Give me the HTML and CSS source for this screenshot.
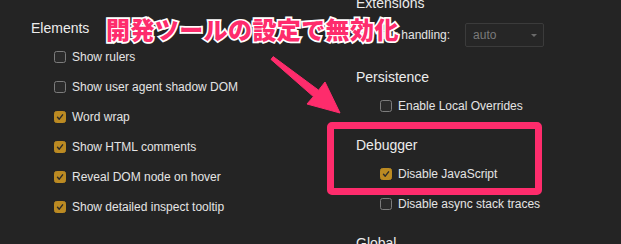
FILE: index.html
```html
<!DOCTYPE html>
<html lang="ja">
<head>
<meta charset="utf-8">
<title>Settings</title>
<link rel="stylesheet" href="styles.css">
</head>
<body>
<div class="page">
  <div class="col col-left">
    <section class="section">
      <h2 class="heading">Elements</h2>
      <div class="rows">
        <label class="row"><span class="cb"></span>Show rulers</label>
        <label class="row"><span class="cb"></span>Show user agent shadow DOM</label>
        <label class="row"><span class="cb on"><svg viewBox="0 0 12 12"><path d="M3 6.3 L5.1 8.6 L9.1 3.4"/></svg></span>Word wrap</label>
        <label class="row"><span class="cb on"><svg viewBox="0 0 12 12"><path d="M3 6.3 L5.1 8.6 L9.1 3.4"/></svg></span>Show HTML comments</label>
        <label class="row"><span class="cb on"><svg viewBox="0 0 12 12"><path d="M3 6.3 L5.1 8.6 L9.1 3.4"/></svg></span>Reveal DOM node on hover</label>
        <label class="row"><span class="cb on"><svg viewBox="0 0 12 12"><path d="M3 6.3 L5.1 8.6 L9.1 3.4"/></svg></span>Show detailed inspect tooltip</label>
      </div>
    </section>
  </div>
  <div class="col col-right">
    <section class="section first">
      <h2 class="heading">Extensions</h2>
      <div class="rows">
        <div class="row select-row">
          <span class="label">Link handling:</span>
          <span class="select">auto<span class="caret"></span></span>
        </div>
      </div>
    </section>
    <section class="section">
      <h2 class="heading">Persistence</h2>
      <div class="rows">
        <label class="row"><span class="cb"></span>Enable Local Overrides</label>
      </div>
    </section>
    <section class="section">
      <h2 class="heading">Debugger</h2>
      <div class="rows">
        <label class="row"><span class="cb on"><svg viewBox="0 0 12 12"><path d="M3 6.3 L5.1 8.6 L9.1 3.4"/></svg></span>Disable JavaScript</label>
        <label class="row"><span class="cb"></span>Disable async stack traces</label>
      </div>
    </section>
    <section class="section">
      <h2 class="heading">Global</h2>
    </section>
  </div>

  <div class="note">開発ツールの設定で無効化</div>
  <svg class="arrow" viewBox="0 0 621 244" width="621" height="244">
    <polygon points="273.2,56.6 318.6,90.2 325,82 340,113 307,104 313.4,96.6 271,59.4" />
  </svg>
  <div class="highlight"></div>
</div>
</body>
</html>
```

FILE: styles.css
```css
html, body {
  margin: 0;
  padding: 0;
  background: #242424;
}

body {
  width: 621px;
  height: 244px;
  overflow: hidden;
  font-family: "Liberation Sans", Arial, sans-serif;
  color: #e3e3e3;
}

.page {
  position: relative;
  width: 621px;
  height: 244px;
  display: grid;
  grid-template-columns: 356px 1fr;
}

.col-left {
  padding-left: 31px;
  padding-top: 18px;
}

.col-right {
  margin-top: -7px;
}

.section {
  margin-top: 14px;
}

.section.first,
.col-left .section {
  margin-top: 0;
}

.heading {
  margin: 0;
  font-size: 14px;
  font-weight: 400;
  line-height: 20px;
  height: 20px;
  color: #ececec;
  white-space: nowrap;
}

.rows {
  margin-top: 4px;
  padding-left: 23px;
  display: flex;
  flex-direction: column;
}

.col-right .rows {
  padding-left: 24px;
}

.row {
  height: 30px;
  display: flex;
  align-items: center;
  font-size: 12px;
  color: #e4e4e4;
  white-space: nowrap;
}

.cb {
  box-sizing: border-box;
  width: 12px;
  height: 12px;
  border: 1px solid #7c7c7c;
  border-radius: 2.5px;
  background: #2a2a2a;
  margin-right: 6px;
  flex: none;
  display: flex;
}

.cb.on {
  background: #bb8a22;
  border-color: #bb8a22;
}

.cb svg {
  width: 10px;
  height: 10px;
}

.cb svg path {
  fill: none;
  stroke: #2b2b2b;
  stroke-width: 1.7;
  stroke-linecap: round;
  stroke-linejoin: round;
}

.select-row {
  height: 36px;
}

.label {
  margin-right: 15px;
  margin-left: -4px;
}

.select {
  box-sizing: border-box;
  position: relative;
  width: 79px;
  height: 24px;
  border: 1px solid #3b3b3b;
  border-radius: 2px;
  background: #262626;
  color: #7a7a7a;
  font-size: 12px;
  display: flex;
  align-items: center;
  padding-left: 7px;
}

.caret {
  position: absolute;
  right: 6px;
  top: 10px;
  width: 0;
  height: 0;
  border-left: 3px solid transparent;
  border-right: 3px solid transparent;
  border-top: 3px solid #6a6a6a;
}

.note {
  position: absolute;
  left: 106px;
  top: 17px;
  font-family: "Noto Sans CJK JP", sans-serif;
  font-weight: 900;
  font-size: 24px;
  line-height: 24px;
  letter-spacing: 0.4px;
  color: #fe2c6c;
  -webkit-text-stroke: 3.4px #ffffff;
  paint-order: stroke fill;
  white-space: nowrap;
}

.arrow {
  position: absolute;
  left: 0;
  top: 0;
  pointer-events: none;
}

.arrow polygon {
  fill: #fe2c6c;
  stroke: #fe2c6c;
  stroke-width: 1;
  stroke-linejoin: round;
}

.highlight {
  position: absolute;
  left: 327px;
  top: 122px;
  width: 215px;
  height: 73px;
  box-sizing: border-box;
  border: 7px solid #fe2c6c;
  border-radius: 5px;
}
```
